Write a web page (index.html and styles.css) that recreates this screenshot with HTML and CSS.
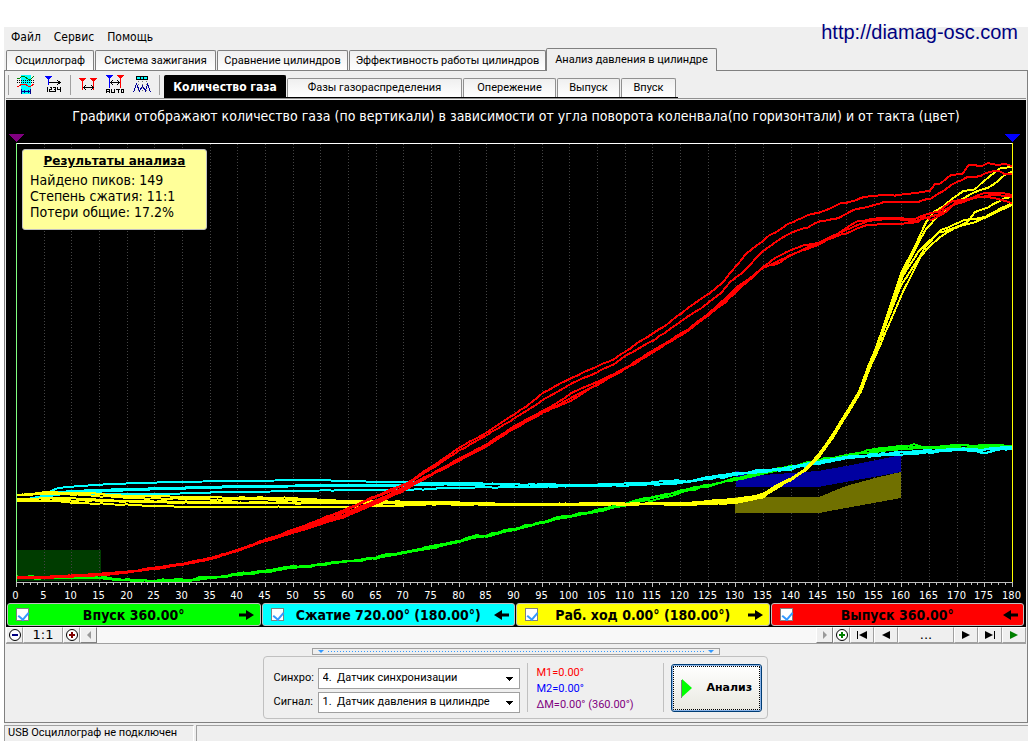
FILE: index.html
```html
<!DOCTYPE html>
<html lang="ru">
<head>
<meta charset="utf-8">
<title>USB Осциллограф</title>
<link rel="stylesheet" href="styles.css">
</head>
<body>
<div class="app">
  <header class="menubar">
    <nav class="menu">
      <button class="menu-item">Файл</button>
      <button class="menu-item">Сервис</button>
      <button class="menu-item">Помощь</button>
    </nav>
    <a class="site-link" href="http://diamag-osc.com">http://diamag-osc.com</a>
  </header>

  <nav class="tabs">
    <button class="tab tab-scope">Осциллограф</button>
    <button class="tab tab-ignition">Система зажигания</button>
    <button class="tab tab-compare">Сравнение цилиндров</button>
    <button class="tab tab-efficiency">Эффективность работы цилиндров</button>
    <button class="tab tab-active">Анализ давления в цилиндре</button>
  </nav>

  <main class="page">
    <div class="toolbar">
      <div class="tools">
        <button class="tool" aria-label="Период">
          <svg width="20" height="20" viewBox="0 0 20 20" shape-rendering="crispEdges"><path fill="#0ff" d="M5 0h10v19H5z"/><path d="M1 3h3l2-2h2l4 3h3l3-3" fill="none" stroke="#008000"/><path d="M1 11h2l3-2h3l3 2h3l3-2" fill="none" stroke="#f00"/><path d="M1 5.500h18M1 7.500h18" stroke="#000" stroke-dasharray="1 1"/><path d="M5.500 14v5M14.500 14v5M6 16.500h8M8 15v3M12 15v3" stroke="#00008b"/></svg>
        </button>
        <button class="tool" aria-label="Нумерация">
          <svg width="20" height="20" viewBox="0 0 20 20" shape-rendering="crispEdges"><path d="M2 1h7L6 5v5H5V5z" fill="#00f"/><path d="M6 7.500h11M14 5l3 2.500-3 2.500" fill="none" stroke="#000"/><path d="M4.500 12v5M6.500 12.500h2v2h-2v2h3M10 12.500h2.500v4H10M10.500 14.500h2M14.500 12v2.500h3M17.500 12v5" fill="none" stroke="#000"/></svg>
        </button>
      </div>
      <div class="tools">
        <button class="tool" aria-label="Маркеры">
          <svg width="20" height="20" viewBox="0 0 20 20" shape-rendering="crispEdges"><path d="M1 3h7L5 7v8H4V7zM12 3h7l-3 4v8h-1V7z" fill="#f00"/><path d="M5 12.500h11M8 10l-2 2.500L8 15M13 10l2 2.500-2 2.500" fill="none" stroke="#000"/></svg>
        </button>
        <button class="tool" aria-label="Автоматические маркеры">
          <svg width="20" height="20" viewBox="0 0 20 20" shape-rendering="crispEdges"><path d="M1 0h7L5 4v9H4V4z" fill="#00f"/><path d="M12 0h7l-3 4v9h-1V4z" fill="#f00"/><path d="M6 7.500h8M8 5L6 7.500 8 10M12 5l2 2.500-2 2.500M1.500 18v-3l1-1h1l1 1v3M2 16.500h3M6.500 14v3.500h3V14M11 14.500h4M13 14v4M16.500 14.500h2v3h-2z" fill="none" stroke="#000"/></svg>
        </button>
        <button class="tool" aria-label="Гистограмма">
          <svg width="20" height="20" viewBox="0 0 20 20" shape-rendering="crispEdges"><path d="M4 1h12v4H4z" fill="#000"/><path d="M5 2h3v2H5zM9 2h2v2H9zM12 2h3v2h-3z" fill="#0ff"/><path d="M6.500 6v10M10.500 6v10M14.500 6v10" stroke="#777" stroke-dasharray="1 2"/><path d="M1.500 17l3-8 3 7 3-5 3 5 2-7 3 8" fill="none" stroke="#000099"/></svg>
        </button>
      </div>
      <nav class="subtabs">
        <button class="subtab subtab-active">Количество газа</button>
        <button class="subtab subtab-phases">Фазы газораспределения</button>
        <button class="subtab subtab-advance">Опережение</button>
        <button class="subtab subtab-exhaust">Выпуск</button>
        <button class="subtab subtab-intake">Впуск</button>
      </nav>
    </div>

    <section class="chart">
      <h1 class="chart-title">Графики отображают количество газа (по вертикали) в зависимости от угла поворота коленвала(по горизонтали) и от такта (цвет)</h1>
      <svg id="plot" class="plot" viewBox="6 132 1020 470" shape-rendering="crispEdges" role="img" aria-label="Количество газа от угла поворота коленвала"></svg>
      <aside class="results">
        <h2 class="results-title">Результаты анализа</h2>
        <p>Найдено пиков: 149</p>
        <p>Степень сжатия: 11:1</p>
        <p>Потери общие: 17.2%</p>
      </aside>
    </section>

    <div class="channels">
      <label class="channel channel-green"><input class="check" type="checkbox" checked><span>Впуск 360.00°</span><svg class="arrow" width="16" height="12" viewBox="0 0 16 12"><path d="M0 4.500h7V1l8 5-8 5V7.500H0z"/></svg></label>
      <label class="channel channel-cyan"><input class="check" type="checkbox" checked><span>Сжатие 720.00° (180.00°)</span><svg class="arrow" width="16" height="12" viewBox="0 0 16 12"><path d="M16 4.500H9V1L1 6l8 5V7.500h7z"/></svg></label>
      <label class="channel channel-yellow"><input class="check" type="checkbox" checked><span>Раб. ход 0.00° (180.00°)</span><svg class="arrow" width="16" height="12" viewBox="0 0 16 12"><path d="M0 4.500h7V1l8 5-8 5V7.500H0z"/></svg></label>
      <label class="channel channel-red"><input class="check" type="checkbox" checked><span>Выпуск 360.00°</span><svg class="arrow" width="16" height="12" viewBox="0 0 16 12"><path d="M16 4.500H9V1L1 6l8 5V7.500h7z"/></svg></label>
    </div>

    <div class="transport">
      <button class="key" aria-label="Уменьшить"><svg width="14" height="14" viewBox="0 0 14 14"><circle cx="7" cy="7" r="5.500" fill="#fff" stroke="#000"/><path d="M4 6h6v2H4z" fill="#000080"/></svg></button>
      <button class="key key-scale">1:1</button>
      <button class="key" aria-label="Увеличить"><svg width="14" height="14" viewBox="0 0 14 14"><circle cx="7" cy="7" r="5.500" fill="#fff" stroke="#000"/><path d="M4 6h2V4h2v2h2v2H8v2H6V8H4z" fill="#800000"/></svg></button>
      <button class="key key-scroll" aria-label="Влево"><svg width="8" height="8" viewBox="0 0 8 8"><path d="M6 0v8L2 4z" fill="#999"/></svg></button>
      <div class="track"></div>
      <button class="key key-scroll" aria-label="Вправо"><svg width="8" height="8" viewBox="0 0 8 8"><path d="M2 0v8l4-4z" fill="#999"/></svg></button>
      <button class="key" aria-label="Добавить"><svg width="14" height="14" viewBox="0 0 14 14"><circle cx="7" cy="7" r="5.500" fill="#fff" stroke="#000"/><path d="M4 6h2V4h2v2h2v2H8v2H6V8H4z" fill="#008000"/></svg></button>
      <button class="key key-wide" aria-label="В начало"><svg width="12" height="8" viewBox="0 0 12 8"><path d="M1 0h1v8H1zM11 0v8L3 4z"/></svg></button>
      <button class="key key-wide" aria-label="Назад"><svg width="12" height="8" viewBox="0 0 12 8"><path d="M10 0v8L2 4z"/></svg></button>
      <button class="key key-more">...</button>
      <button class="key key-wide" aria-label="Вперёд"><svg width="12" height="8" viewBox="0 0 12 8"><path d="M2 0v8l8-4z"/></svg></button>
      <button class="key key-wide" aria-label="В конец"><svg width="12" height="8" viewBox="0 0 12 8"><path d="M10 0h1v8h-1zM1 0v8l8-4z"/></svg></button>
      <button class="key key-wide" aria-label="Пуск"><svg width="12" height="8" viewBox="0 0 12 8"><path d="M2 0v8l8-4z" fill="#008000"/></svg></button>
    </div>

    <div class="bottom">
      <button class="splitter" aria-label="Свернуть панель"><span class="caret"></span><span class="dots"></span><span class="caret"></span></button>
      <form class="panel">
        <div class="fields">
          <label for="sync">Синхро:</label>
          <select id="sync" class="select"><option>4.&nbsp; Датчик синхронизации</option></select>
          <label for="signal">Сигнал:</label>
          <select id="signal" class="select"><option>1.&nbsp; Датчик давления в цилиндре</option></select>
        </div>
        <div class="markers">
          <span class="m1">M1=0.00°</span>
          <span class="m2">M2=0.00°</span>
          <span class="dm">ΔM=0.00° (360.00°)</span>
        </div>
        <button class="run" type="button"><svg width="12" height="20" viewBox="0 0 12 20"><path d="M0 2h1v18H0z" fill="#808080"/><path d="M1 1v18l10-9z" fill="#0f0"/></svg><span>Анализ</span></button>
      </form>
    </div>
  </main>

  <footer class="status">
    <span class="cell cell-first">USB Осциллограф не подключен</span>
    <span class="cell"></span>
  </footer>
</div>
<script src="chart.js"></script>
</body>
</html>
```
FILE: chart.js
```js
const svg = document.getElementById('plot');
const NS = 'http://www.w3.org/2000/svg';
function add(tag, attrs, text) {
  const el = document.createElementNS(NS, tag);
  for (const key in attrs) el.setAttribute(key, attrs[key]);
  if (text !== undefined) el.textContent = text;
  svg.appendChild(el);
}

const LEFT = 16, RIGHT = 1012, TOP = 143, BASE = 582;
const STEP = (RIGHT - LEFT) / 36;

// Tolerance zones
add('path', { d: 'M17 550H101V581H17z', fill: '#003c00' });

// Grid, ticks and degree labels
for (let i = 0; i <= 36; i++) {
  const x = Math.round(LEFT + i * STEP) + 0.5;
  if (i > 0 && i < 36) add('path', { d: `M${x} ${TOP + 1}V${BASE}`, stroke: '#444', 'stroke-dasharray': '1 2' });
  for (let k = 0; k < 4 && (i < 36 || k === 0); k++) {
    const tx = Math.round(LEFT + (i + k / 4) * STEP) + 0.5;
    add('path', { d: `M${tx} ${BASE}v${k ? 3 : 5}`, stroke: '#c0c0c0' });
  }
  add('text', { x: x - 1, y: 599, class: 'degree' }, i * 5);
}
add('path', { d: 'M736 471L763 475L818 471L846 466L901 455V472L818 487H736z', fill: '#0000a0' });
add('path', { d: 'M735 497H819L846 486L875 478L901 472V498L846 508L819 513H735z', fill: '#707000' });

let seed = 7;
function rnd() { seed = (seed * 16807) % 2147483647; return seed / 2147483647 - 0.5; }
function curve(color, noise, pts) {
  const v = pts.split(' ').map(p => p.split(',').map(Number));
  const out = [];
  for (let i = 0; i < v.length - 1; i++) {
    const [x0, y0] = v[i], [x1, y1] = v[i + 1];
    const n = Math.max(1, Math.round((x1 - x0) / 6));
    for (let k = 0; k < n; k++) {
      const t = k / n;
      out.push([x0 + (x1 - x0) * t, y0 + (y1 - y0) * t + rnd() * noise]);
    }
  }
  out.push(v[v.length - 1]);
  add('polyline', { points: out.map(p => p.map(n => n.toFixed(1)).join(',')).join(' '), fill: 'none', stroke: color, 'stroke-width': 2 });
}

const greenStart = '17,578 50,578 100,578 117,580 150,581 182,581 210,578 238,575 265,572 293,568 344,562 376,558 404,553 431,548 459,542 477,537 487,536 515,529 543,523 557,519 597,511 617,507 ';
curve('#0f0', 1, greenStart + '631,502 652,498 688,490 708,485 735,480 763,474 791,467 818,462 846,456 868,450 901,446 930,447 978,445 1001,445 1012,447');
curve('#0f0', 2, greenStart + '631,503 652,500 688,491 708,486 735,478 763,472 791,466 818,460 846,456 868,452 901,448 914,445 935,448 978,447 1001,446 1012,447');
curve('#0f0', 2, greenStart.replace(/(\d+),(\d+)/g, (m, x, y) => x + ',' + (+y - 1)) + '631,501 688,489 735,479 791,467 846,455 901,449 951,446 1012,446');
curve('#0f0', 3, '818,461 846,457 868,451 901,447 951,448 1001,447 1012,447');

const cyanEnd = ' 735,473 763,472 791,467 818,462 846,457 875,456 901,452 918,453 951,449 975,451 985,453 1000,449 1012,447';
curve('#0ff', 0, '17,501 33,501 43,495 58,488 80,486 111,484 173,482 233,481 317,480 344,481 387,482 444,483');
curve('#0ff', 1, '444,483 511,484 584,485 644,483 677,480 688,482 708,477' + cyanEnd);
curve('#0ff', 0, '17,500 33,501 43,497 57,492 93,490 167,488 240,486 344,485 404,485 444,485');
curve('#0ff', 2, '444,485 511,485 584,486 644,485 688,482 708,479 735,474 763,470 791,467 818,463 846,459 875,455 901,454 951,451 1012,449');
curve('#0ff', 0, '17,501 43,496 64,492 93,492 133,490 240,487 344,486 404,486');
curve('#0ff', 1, '17,501 43,497 67,494 157,494 227,492 283,491 344,490 404,490 460,488 584,486 644,485 688,481' + cyanEnd);
curve('#0ff', 3, '688,481 735,475 763,471 791,469 818,464 846,458 901,452 951,450 1012,448');

const rise = ' 818,456 831,438 846,413 859,392 868,367 876,348 888,313 ';
curve('#ff0', 1, '17,495 50,492 83,493 133,496 200,497 290,498 344,501 440,502 505,504 596,504 690,503 735,499 763,495 775,486 791,478 805,470' + rise + '901,274 915,246 926,222 935,211 945,205 955,197 963,191 975,189 988,178 1001,168 1012,167');
curve('#ff0', 1, '17,495 50,494 83,495 133,498 200,499 290,500 344,502 440,502 505,504 596,504 690,505 735,502 763,498 775,488 791,479 805,470' + rise + '901,278 915,250 926,229 936,218 945,210 961,200 975,192 988,188 998,181 1005,175 1012,172');
curve('#ff0', 1, '17,499 57,498 133,501 210,502 344,503 440,504 505,505 596,503 690,504 735,501 763,494 775,486 791,479 805,469 819,454 832,436 847,411 860,390 869,367 877,348 889,316 901,285 918,260 925,247 938,233 955,227 968,222 975,212 988,207 1005,198 1012,197');
curve('#ff0', 1, '17,501 57,500 100,501 133,502 210,503 344,503 440,504 505,505 596,505 690,503 735,500 763,496 775,488 791,480 805,471' + rise + '903,276 918,252 941,230 965,220 985,217 1001,208 1012,203');
curve('#ff0', 1, '17,501 57,501 77,503 133,505 190,507 344,507 400,506 440,504 505,505 596,504 690,504 735,503 763,497 791,479 805,471 820,456 833,438 848,413 861,391 870,368 879,348 890,322 904,290 920,258 928,248 941,236 955,228 975,222 995,213 1012,205');

const redStart = '17,577 50,577 100,574 127,572 154,568 182,564 211,558 238,550 265,540 ';
curve('#f00', 1, redStart + '293,530 344,510 371,498 407,483 431,467 459,448 487,432 515,414 531,403 543,393 571,378 597,366 614,359 626,351 642,340 665,326 688,308 709,294 725,280 735,267 746,254 763,241 769,235 775,233 788,224 798,220 808,215 818,213 831,208 841,203 851,202 861,198 881,195 895,196 915,193 930,191 935,184 941,183 951,175 962,174 969,165 981,166 988,163 998,165 1005,164 1012,166');
curve('#f00', 1, redStart + '293,531 344,511 371,499 407,484 431,469 459,451 487,435 515,418 543,400 571,384 597,372 614,364 627,355 654,340 670,329 688,316 701,308 721,293 730,282 745,270 763,251 775,242 791,233 808,227 821,221 838,218 855,209 875,205 885,202 901,202 918,202 931,198 943,191 951,185 968,177 980,176 985,173 998,170 1005,174 1012,174');
curve('#f00', 1, redStart + '293,531 344,513 375,501 407,486 431,474 459,459 487,444 515,426 543,411 557,403 571,393 597,382 624,369 652,351 671,340 688,329 709,313 726,298 735,289 751,277 763,267 775,258 791,250 805,245 818,243 838,233 858,221 885,218 915,219 923,215 938,212 951,202 971,198 985,193 1001,193 1012,195');
curve('#f00', 1, redStart + '293,532 344,515 375,503 407,487 431,475 459,460 487,445 515,427 543,412 557,407 571,401 597,384 624,369 652,351 671,340 688,330 709,313 726,302 735,291 751,278 763,267 780,263 788,256 805,249 818,243 841,235 868,225 895,224 918,222 924,216 931,220 945,213 955,203 978,197 995,198 1012,203');
curve('#f00', 1, redStart.replace(/(\d+),(\d+)/g, (m, x, y) => x + ',' + (+y + 1)) + '293,533 344,517 375,504 407,489 431,475 459,461 487,446 515,428 543,413 571,398 597,385 624,370 652,353 671,341 688,331 709,315 735,293 763,268 791,255 818,245 841,232 868,221 895,219 915,221 938,214 951,206 971,199 990,195 1001,195 1012,197');

// Plot frame and cursor markers
add('path', { d: 'M16 143.500H1012', stroke: '#fff' });
add('path', { d: 'M16 582.500H1013', stroke: '#c0c0c0' });
add('path', { d: 'M16.500 143V582', stroke: '#80ff80' });
add('path', { d: 'M1012.500 143V582', stroke: '#ff0' });
add('path', { d: 'M8 134H24L16 142z', fill: '#800080' });
add('path', { d: 'M1004 134H1020L1012 142z', fill: '#00f' });
```
FILE: styles.css
```css
* { box-sizing: border-box; }
body {
  margin: 0;
  padding: 27px 4px 5px;
  background: #fff;
  color: #000;
  font: 11px/14px Roboto, sans-serif;
}
button, input, select { font: inherit; color: inherit; margin: 0; padding: 0; border: 0; background: none; }
.app { background: #efefef; }

.menubar { display: flex; align-items: center; height: 20px; margin-bottom: 1px; position: relative; }
.menu { display: flex; gap: 13px; padding-left: 7px; font: 12px/14px "DejaVu Sans Condensed", sans-serif; }
.site-link {
  position: absolute; right: 10px; top: -6px;
  font: 20px/22px "Liberation Sans", Arial, sans-serif;
  color: #000080; text-decoration: none;
}

.tabs { display: flex; align-items: flex-end; gap: 1px; height: 22px; padding-left: 2px; }
.tab {
  flex: 0 1 auto; height: 20px; white-space: nowrap;
  border: 1px solid #808080; border-bottom: 0; border-radius: 2px 2px 0 0;
  background: linear-gradient(#efefef, #fff);
}
.tab-scope { width: 88px; }
.tab-ignition { width: 121px; }
.tab-compare { width: 131px; }
.tab-efficiency { width: 197px; }
.tab-active { width: 171px; height: 23px; margin: 0 0 -1px -1px; background: #efefef; position: relative; }

.page { border: 1px solid #808080; padding: 0 1px; }
.toolbar { display: flex; height: 28px; border-bottom: 1px solid #909090; }
.tools { display: flex; gap: 7px; align-items: center; padding: 0 7px; margin: 4px 0 3px 2px; border-left: 1px solid #a0a0a0; }
.tools + .tools { margin-left: 0; border-right: 1px solid #a0a0a0; }
.tool { width: 20px; height: 20px; }
.tool svg { display: block; }
.subtabs { display: flex; align-items: flex-end; gap: 1px; height: 27px; margin-left: 4px; border-bottom: 1px solid #000; padding-right: 2px; }
.subtab {
  height: 19px; white-space: nowrap;
  border: 1px solid #909090; border-bottom: 0; border-radius: 2px 2px 0 0;
  background: linear-gradient(#efefef, #fff);
}
.subtab-phases { width: 175px; }
.subtab-advance { width: 93px; }
.subtab-exhaust { width: 63px; }
.subtab-intake { width: 55px; }
.subtab-active { width: 122px; height: 22px; border-color: #000; background: #000; color: #fff; font: bold 12px/14px "DejaVu Sans Condensed", sans-serif; }

.chart { position: relative; background: #000; margin-top: 1px; }
.chart-title {
  margin: 0; height: 32px; padding-top: 7px; overflow: hidden;
  font: 14px/18px "DejaVu Sans Condensed", sans-serif; color: #fff; text-align: center; white-space: nowrap;
}
.plot { display: block; width: 100%; height: auto; }
.degree { font: 11px "DejaVu Sans Condensed", sans-serif; fill: #fff; text-anchor: middle; }
.results {
  position: absolute; left: 16px; top: 49px; width: 185px; padding: 3px 7px 9px;
  border: 1px solid #c0c0c0; border-radius: 3px; background: #ffff99;
  font: 14px/16px "DejaVu Sans Condensed", sans-serif;
}
.results p { margin: 0; white-space: nowrap; }
.results-title { margin: 0 0 3px; font: bold 12px/16px "DejaVu Sans", sans-serif; text-decoration: underline; text-align: center; }

.channels { display: grid; grid-template-columns: repeat(4, 1fr); gap: 1px; background: #000; padding: 1px 2px 1px 1px; }
.channel {
  display: flex; align-items: center; justify-content: space-between; height: 23px; padding: 0 5px 0 8px;
  border: 1px solid #c0c0c0; border-radius: 3px; font: bold 14px/16px "DejaVu Sans Condensed", sans-serif; white-space: nowrap;
}
.channel-green { background: #0f0; }
.channel-cyan { background: #0ff; }
.channel-yellow { background: #ff0; }
.channel-red { background: #f00; }
.check { appearance: none; width: 13px; height: 13px; border: 1px solid #808080; background: #fff; position: relative; }
.check:checked::after {
  content: ""; position: absolute; left: 3px; top: 1px; width: 5px; height: 8px;
  border: solid #3399ff; border-width: 0 2px 2px 0; transform: rotate(40deg);
}

.transport { display: flex; height: 17px; border-bottom: 1px solid #a0a0a0; }
.key {
  display: flex; align-items: center; justify-content: center; flex: none; width: 17px; height: 16px;
  border: 1px solid; border-color: #fff #a0a0a0 #a0a0a0 #fff; background: #efefef;
}
.key-scale { width: 40px; font: 13px/14px "DejaVu Sans", sans-serif; }
.key-scroll { border-right-color: #808080; border-bottom-color: #808080; }
.key-wide { width: 24px; }
.key-more { width: 56px; font: 13px/14px "DejaVu Sans", sans-serif; }
.track { flex: 1; background: #f8f8f8; }

.bottom { display: flex; flex-direction: column; align-items: center; padding: 4px 0 3px; }
.splitter { display: flex; align-items: center; gap: 4px; width: 408px; height: 7px; padding: 0 5px; border: 1px solid #a0a0a0; }
.caret { border: 3px solid transparent; border-top-color: #3399ff; border-bottom: 0; }
.dots { flex: 1; height: 1px; background: repeating-linear-gradient(90deg, #3399ff 0 1px, transparent 1px 3px); }
.panel { display: flex; align-items: center; width: 505px; height: 63px; margin: 1px 2px 0 0; padding: 0 5px 0 10px; border: 1px solid #c0c0c0; border-radius: 4px; }
.fields { display: grid; grid-template-columns: 44px 202px; gap: 3px 0; align-items: center; padding-top: 5px; }
.select {
  appearance: none; height: 21px; width: 100%; padding: 0 4px; border: 1px solid #a0a0a0; border-radius: 0;
  background:
    linear-gradient(#000, #000) right 9px top 11px / 1px 1px no-repeat,
    linear-gradient(#000, #000) right 8px top 10px / 3px 1px no-repeat,
    linear-gradient(#000, #000) right 7px top 9px / 5px 1px no-repeat,
    linear-gradient(#000, #000) right 6px top 8px / 7px 1px no-repeat, #fff;
}
.markers { display: flex; flex-direction: column; justify-content: center; width: 137px; height: 49px; margin: 0 7px; padding: 2px 0 0 9px; border: solid #c0c0c0; border-width: 0 1px; line-height: 16px; }
.m1 { color: #f00; }
.m2 { color: #00f; }
.dm { color: #800080; }
.run {
  display: flex; align-items: center; gap: 14px; width: 91px; height: 48px; padding-left: 9px;
  border: 1px solid #003c74; border-radius: 3px; font: bold 11px/14px "DejaVu Sans", sans-serif;
  background: linear-gradient(#fff, #e8e8e0); box-shadow: inset 0 0 0 1px #8ab4e8; outline: 1px dotted #000; outline-offset: -3px;
}

.status { display: flex; gap: 2px; height: 18px; padding-top: 2px; }
.cell { flex: 1; padding: 0 3px; border: solid #a0a0a0; border-width: 1px 0 0 1px; white-space: nowrap; }
.cell-first { flex: 0 0 190px; border-right: 1px solid #fff; }
```
